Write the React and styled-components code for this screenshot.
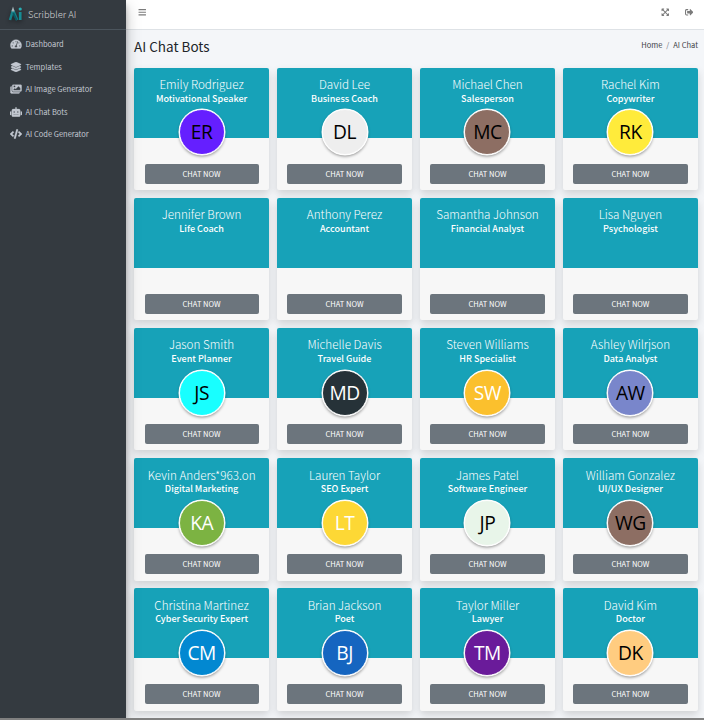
import React from "react";
import styled, { createGlobalStyle } from "styled-components";
import { FaTachometerAlt, FaLayerGroup, FaImages, FaRobot, FaCode, FaBars, FaExpandArrowsAlt, FaSignOutAlt } from "react-icons/fa";

const Global = createGlobalStyle`
  * { box-sizing: border-box; }
  body {
    margin: 0;
    overflow: hidden;
    background: #f4f6f9;
    color: #212529;
    font-family: "Noto Sans CJK SC", "Noto Sans", sans-serif;
    font-size: 7.5px;
  }
`;

const Page = styled.div`
  display: flex;
  width: 704px;
  height: 720px;
  overflow: hidden;
  border-bottom: 2px solid #808080;
`;

const Sidebar = styled.aside`
  position: relative;
  z-index: 2;
  flex: none;
  width: 126px;
  background: #343a40;
  box-shadow: 0 7px 14px rgba(0, 0, 0, 0.25), 0 5px 5px rgba(0, 0, 0, 0.22);
`;

const Brand = styled.div`
  display: flex;
  align-items: center;
  height: 29.5px;
  padding-left: 8px;
  border-bottom: 1px solid #4b545c;
  color: rgba(255, 255, 255, 0.8);
  font-size: 9.4px;
  font-weight: 300;
  line-height: 14px;
  white-space: nowrap;
`;

const Logo = styled.svg`
  width: 15px;
  height: 16px;
  margin-right: 5px;
  filter: drop-shadow(0 2px 2px rgba(0, 0, 0, 0.4));
`;

const Menu = styled.nav`
  display: flex;
  flex-direction: column;
  padding-top: 3.6px;
`;

const MenuItem = styled.a`
  display: flex;
  align-items: center;
  height: 22.5px;
  padding-left: 9.6px;
  color: #c2c7d0;
  line-height: 12px;
  white-space: nowrap;
  svg {
    width: 12px;
    height: 10px;
    margin-right: 3.9px;
    stroke: currentColor;
    stroke-width: 14px;
  }
`;

const Main = styled.main`
  flex: 1;
  min-width: 0;
`;

const Topbar = styled.header`
  display: flex;
  align-items: center;
  height: 29.5px;
  padding: 0 10.7px 4px 12px;
  background: #fff;
  border-bottom: 1px solid #dee2e6;
  color: #7b7b7b;
  svg { width: 8.5px; height: 8.5px; }
`;

const Actions = styled.div`
  display: flex;
  gap: 15.5px;
  margin-left: auto;
`;

const Heading = styled.div`
  display: flex;
  justify-content: space-between;
  height: 38px;
  padding: 7px 6px 0 8px;
`;

const Title = styled.h1`
  margin: 0;
  font-size: 13.5px;
  font-weight: 400;
  line-height: 19px;
`;

const Crumbs = styled.div`
  display: flex;
  gap: 4px;
  color: #3d4247;
  font-size: 7.5px;
  line-height: 16px;
  span { color: #6c757d; }
`;

const Grid = styled.section`
  display: grid;
  grid-template-columns: repeat(4, 135.2px);
  grid-auto-rows: 122.3px;
  gap: 7.95px 7.75px;
  padding-left: 8px;
`;

const Card = styled.article`
  display: flex;
  flex-direction: column;
  align-items: center;
  background: #f7f7f7;
  border-radius: 2px;
  box-shadow: 0 4px 8px rgba(0, 0, 0, 0.15);
`;

const CardHeader = styled.div`
  width: 100%;
  height: 70px;
  padding-top: 8.5px;
  background: #17a2b8;
  border-radius: 2px 2px 0 0;
  color: #fff;
  text-align: center;
  white-space: nowrap;
`;

const Name = styled.h3`
  margin: 0;
  font-size: 11.65px;
  font-weight: 300;
  line-height: 15.5px;
`;

const Role = styled.h5`
  margin: 0;
  font-size: 9.05px;
  font-weight: 500;
  line-height: 13.4px;
`;

const Avatar = styled.div`
  display: flex;
  align-items: center;
  justify-content: center;
  flex: none;
  width: 46px;
  height: 46px;
  margin: -28.3px 0 -17.7px;
  border: 1px solid #fff;
  border-radius: 50%;
  background: ${(p) => p.$bg};
  color: ${(p) => p.$fg};
  font: 400 19.2px/24px "Open Sans", sans-serif;
  letter-spacing: -0.5px;
  box-shadow: 0 0 0 0.5px #fff, 0 1.5px 3px rgba(0, 0, 0, 0.4);
`;

const ChatButton = styled.button`
  width: 114.2px;
  height: 20px;
  margin: auto 0 6.3px;
  padding: 0;
  border: 0;
  border-radius: 2px;
  background: #6c757d;
  color: #fff;
  font: inherit;
  line-height: 20px;
`;

const BOTS = [
  ["Emily Rodriguez", "Motivational Speaker", "ER", "#651fff", "#000"],
  ["David Lee", "Business Coach", "DL", "#eeeeee", "#000"],
  ["Michael Chen", "Salesperson", "MC", "#8d6e63", "#000"],
  ["Rachel Kim", "Copywriter", "RK", "#ffeb3b", "#000"],
  ["Jennifer Brown", "Life Coach"],
  ["Anthony Perez", "Accountant"],
  ["Samantha Johnson", "Financial Analyst"],
  ["Lisa Nguyen", "Psychologist"],
  ["Jason Smith", "Event Planner", "JS", "#18ffff", "#000"],
  ["Michelle Davis", "Travel Guide", "MD", "#263238", "#fff"],
  ["Steven Williams", "HR Specialist", "SW", "#fbc02d", "#fff"],
  ["Ashley Wilrjson", "Data Analyst", "AW", "#7986cb", "#000"],
  ["Kevin Anders*963.on", "Digital Marketing", "KA", "#7cb342", "#fff"],
  ["Lauren Taylor", "SEO Expert", "LT", "#fdd835", "#fff"],
  ["James Patel", "Software Engineer", "JP", "#e8f5e9", "#000"],
  ["William Gonzalez", "UI/UX Designer", "WG", "#8d6e63", "#000"],
  ["Christina Martinez", "Cyber Security Expert", "CM", "#0288d1", "#fff"],
  ["Brian Jackson", "Poet", "BJ", "#1565c0", "#fff"],
  ["Taylor Miller", "Lawyer", "TM", "#6a1b9a", "#fff"],
  ["David Kim", "Doctor", "DK", "#ffcc80", "#000"],
];

const MENU = [
  [FaTachometerAlt, "Dashboard"],
  [FaLayerGroup, "Templates"],
  [FaImages, "AI Image Generator"],
  [FaRobot, "AI Chat Bots"],
  [FaCode, "AI Code Generator"],
];

export default function App() {
  return (
    <>
      <Global />
      <Page>
        <Sidebar>
          <Brand>
            <Logo viewBox="0 0 15 16" fill="none">
              <path d="M2 14 5 4 9.2 14" stroke="#16828a" strokeWidth="2.5" strokeLinejoin="round" />
              <path d="M4 5.5 5 2.5 6 5.5" stroke="#a9b4b8" strokeWidth="1.2" />
              <path d="M5.2 7 8.5 14" stroke="#0b5963" strokeWidth="1.8" />
              <path d="M12.2 6V14" stroke="#168c94" strokeWidth="2.7" />
              <circle cx="12.2" cy="3" r="1.6" fill="#28aeb4" />
            </Logo>
            Scribbler AI
          </Brand>
          <Menu>
            {MENU.map(([Icon, label]) => (
              <MenuItem key={label}><Icon />{label}</MenuItem>
            ))}
          </Menu>
        </Sidebar>
        <Main>
          <Topbar>
            <FaBars />
            <Actions><FaExpandArrowsAlt /><FaSignOutAlt /></Actions>
          </Topbar>
          <Heading>
            <Title>AI Chat Bots</Title>
            <Crumbs>Home <span>/</span> AI Chat</Crumbs>
          </Heading>
          <Grid>
            {BOTS.map(([name, role, initials, bg, fg]) => (
              <Card key={name}>
                <CardHeader>
                  <Name>{name}</Name>
                  <Role>{role}</Role>
                </CardHeader>
                {initials && <Avatar $bg={bg} $fg={fg}>{initials}</Avatar>}
                <ChatButton>CHAT NOW</ChatButton>
              </Card>
            ))}
          </Grid>
        </Main>
      </Page>
    </>
  );
}
